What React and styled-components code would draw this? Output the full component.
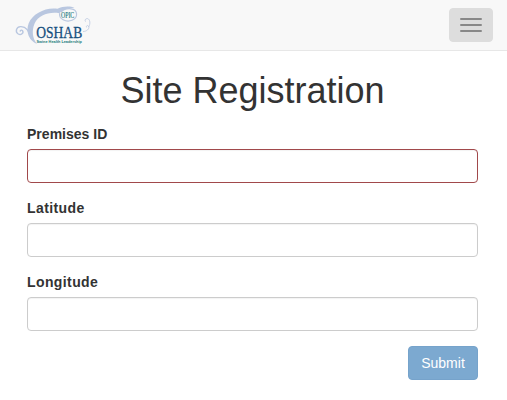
import React from "react";
import styled, { createGlobalStyle } from "styled-components";

const GlobalStyle = createGlobalStyle`
  *, *::before, *::after { box-sizing: border-box; }
  body {
    margin: 0;
    background: #fff;
    color: #333;
    font: 14px/20px "Liberation Sans", Arial, sans-serif;
  }
`;

const Navbar = styled.nav`
  display: flex;
  justify-content: space-between;
  align-items: flex-start;
  height: 51px;
  padding: 0 14px 0 13px;
  background: #f8f8f8;
  border-bottom: 1px solid #e7e7e7;
`;

const LogoSvg = styled.svg`
  display: block;
  width: 80px;
  height: 50px;
`;

const LogoText = styled.text`
  font-family: ${(p) => (p.$sans ? '"Liberation Sans", sans-serif' : '"Liberation Serif", serif')};
  font-size: ${(p) => p.$size}px;
  font-weight: ${(p) => (p.$sans ? 700 : 400)};
  fill: ${(p) => p.$color};
  stroke: ${(p) => p.$color};
  stroke-width: ${(p) => p.$stroke || 0};
`;

const MenuButton = styled.button`
  display: flex;
  flex-direction: column;
  align-items: center;
  gap: 4px;
  width: 44px;
  height: 34px;
  margin: 8px 0 0;
  padding: 9px 0 0;
  border: 1px solid #ddd;
  border-radius: 4px;
  background: #ddd;
`;

const Bar = styled.span`
  width: 22px;
  height: 2px;
  border-radius: 1px;
  background: #888;
`;

const Form = styled.form`
  display: flex;
  flex-direction: column;
  gap: 15px;
  padding: 20px 29px 0 27px;
`;

const Title = styled.h1`
  margin: 0 0 -1px;
  font-size: 36px;
  font-weight: 400;
  line-height: 39px;
  text-align: center;
`;

const Field = styled.div`
  display: flex;
  flex-direction: column;
  gap: 5px;
`;

const Label = styled.label`
  font-weight: 700;
  letter-spacing: ${(p) => p.$tracking || "0.4px"};
`;

const Input = styled.input`
  width: 100%;
  height: 34px;
  padding: 6px 12px;
  border: 1px solid ${(p) => (p.$invalid ? "#a1494b" : "#ccc")};
  border-radius: 4px;
  background: #fff;
  box-shadow: inset 0 1px 1px rgba(0, 0, 0, 0.05);
  outline: none;
`;

const SubmitButton = styled.button`
  align-self: flex-end;
  width: 70px;
  height: 34px;
  padding: 0;
  border: 1px solid #76a3cb;
  border-radius: 4px;
  background: #7ca9d0;
  color: #fff;
  font: inherit;
`;

const Logo = () => (
  <LogoSvg viewBox="13 0 80 50" role="img" aria-label="OSHAB">
    <g fill="none" stroke="#b9c7e0" strokeLinecap="round">
      <path d="M31.5 39C29.5 31 25.5 26.3 20.5 26.6C16 27 15 32 18.3 34C21 35.5 24 33 22.6 30.8C21.8 29.8 20.5 30 20.2 31" strokeWidth="1.4" />
      <path d="M83.5 31.5C86.5 31.5 89.5 29 88.8 26.6C88 24.8 86 25.5 86.4 27M88.8 26.6C90.8 24 90 19 87.5 18.6C85.5 18.5 84.5 20 85.3 21.3" strokeWidth="0.8" />
      <path d="M59.7 13.5C58.5 19 66 22.5 72 20.3C78.5 17.8 78 9.5 71 8.8C67 8.4 63 9.8 61.3 11.8" strokeWidth="1.2" />
    </g>
    <path
      d="M37 44C29 40.5 25.5 32 28.6 23.5C32.5 13.5 46 7 57.5 8.8C62.5 6.2 70 5.6 74.5 8C68 7.4 62.5 9.4 59.3 13.2C49 11.5 38.5 15 34.6 23.5C31.5 31 32.5 38.5 37 44Z"
      fill="#b9c7e0"
    />
    <LogoText x="61" y="17.6" textLength="13.2" lengthAdjust="spacingAndGlyphs" $size={7.6} $color="#197b80" $stroke={0.15}>OPIC</LogoText>
    <LogoText x="36.2" y="38.2" textLength="46" lengthAdjust="spacingAndGlyphs" $size={17} $color="#174f7e" $stroke={0.3}>OSHAB</LogoText>
    <LogoText x="36.5" y="43.4" textLength="45.3" lengthAdjust="spacingAndGlyphs" $sans $size={4.2} $color="#197b78">Swine Health Leadership</LogoText>
  </LogoSvg>
);

export default function App() {
  return (
    <>
      <GlobalStyle />
      <Navbar>
        <Logo />
        <MenuButton type="button" aria-label="Toggle navigation">
          <Bar />
          <Bar />
          <Bar />
        </MenuButton>
      </Navbar>
      <Form>
        <Title>Site Registration</Title>
        <Field>
          <Label htmlFor="premises" $tracking="0.02px">Premises ID</Label>
          <Input id="premises" $invalid />
        </Field>
        <Field>
          <Label htmlFor="latitude">Latitude</Label>
          <Input id="latitude" />
        </Field>
        <Field>
          <Label htmlFor="longitude">Longitude</Label>
          <Input id="longitude" />
        </Field>
        <SubmitButton type="submit">Submit</SubmitButton>
      </Form>
    </>
  );
}
